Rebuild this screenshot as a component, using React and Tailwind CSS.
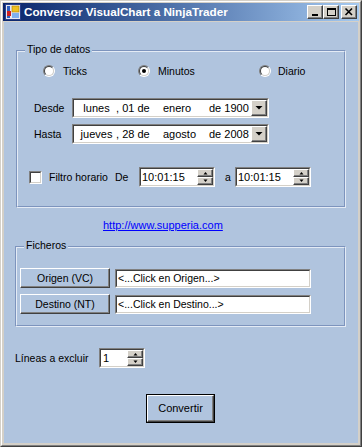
import React from "react";

function Sunken({ className = "", innerClass = "", children }) {
  return (
    <div className={`border border-t-[#808080] border-l-[#808080] border-b-white border-r-white ${className}`}>
      <div className={`h-full border border-t-[#404040] border-l-[#404040] border-b-[#d4d0c8] border-r-[#d4d0c8] bg-white ${innerClass}`}>
        {children}
      </div>
    </div>
  );
}

function Raised({ className = "", children }) {
  return (
    <div className={`border border-t-white border-l-white border-b-[#404040] border-r-[#404040] shadow-[inset_-1px_-1px_#808080] ${className}`}>
      {children}
    </div>
  );
}

function DropBtn() {
  return (
    <Raised className="w-[16px] h-full bg-[#d4d0c8] flex items-center justify-center">
      <svg width="14" height="14" viewBox="0 0 14 14">
        <polygon points="3.5,5 10.5,5 7,8.5" fill="#000" />
      </svg>
    </Raised>
  );
}

function SpinHalf({ up }) {
  return (
    <Raised className="w-full h-[8px] bg-[#d4d0c8] flex items-center justify-center">
      <svg width="7" height="4" viewBox="0 0 7 4">
        {up ? (
          <polygon points="1.5,3.5 5.5,3.5 3.5,1" fill="#000" />
        ) : (
          <polygon points="1.5,0.5 5.5,0.5 3.5,3" fill="#000" />
        )}
      </svg>
    </Raised>
  );
}

function Spin() {
  return (
    <div className="w-[16px] h-[16px] flex flex-col">
      <SpinHalf up />
      <SpinHalf />
    </div>
  );
}

function TimePicker({ value }) {
  return (
    <Sunken className="w-[76px] h-[20px]" innerClass="flex items-center justify-between">
      <span className="pl-px text-[11px] leading-[13px]">{value}</span>
      <Spin />
    </Sunken>
  );
}

function DateCombo({ day, mid, month, year }) {
  return (
    <Sunken className="w-[197px] h-[20px]" innerClass="flex items-center">
      <div className="flex-1 flex items-center text-[11px] leading-[13px] whitespace-pre">
        <span className="w-[6px] shrink-0" />
        <span className="w-[33px] shrink-0 text-center">{day}</span>
        <span className="w-[50px] shrink-0">{mid}</span>
        <span className="w-[46px] shrink-0">{month}</span>
        <span>{year}</span>
      </div>
      <DropBtn />
    </Sunken>
  );
}

function Radio({ checked }) {
  return (
    <div className="w-[12px] h-[12px] rounded-full border border-t-[#808080] border-l-[#808080] border-b-white border-r-white">
      <div className="w-full h-full rounded-full border border-t-[#404040] border-l-[#404040] border-b-[#d4d0c8] border-r-[#d4d0c8] bg-white flex items-center justify-center">
        {checked && <div className="w-[4px] h-[4px] rounded-full bg-black" />}
      </div>
    </div>
  );
}

function Group({ label, className = "", labelClass = "", children }) {
  return (
    <div className={`relative border border-t-[#7d94bd] border-l-[#7d94bd] border-b-[#e4ebf5] border-r-[#e4ebf5] ${className}`}>
      <div className="border border-t-[#e4ebf5] border-l-[#e4ebf5] border-b-[#7d94bd] border-r-[#7d94bd]">
        {children}
      </div>
      <span className={`absolute top-[-8px] px-[2px] bg-[#b0c4de] text-[10.5px] leading-[13px] ${labelClass}`}>
        {label}
      </span>
    </div>
  );
}

function WinButton({ className = "", children }) {
  return (
    <Raised className={`w-[16px] h-[14px] bg-[#d4d0c8] flex items-center justify-center ${className}`}>
      {children}
    </Raised>
  );
}

export default function App() {
  return (
    <div className="w-[362px] h-[447px] border border-t-[#d4d0c8] border-l-[#d4d0c8] border-b-[#404040] border-r-[#404040] font-['Liberation_Sans',Arial,sans-serif] text-black">
      <div className="h-full border border-t-white border-l-white border-b-[#808080] border-r-[#808080] bg-[#d4d0c8] p-px flex flex-col">
        {/* Title bar */}
        <div className="h-[18px] flex items-center bg-gradient-to-r from-[#0a246a] to-[#a6caf0] pl-[2px] pr-[2px]">
          <svg width="16" height="16" viewBox="0 0 16 16" className="shrink-0">
            <rect x="0.5" y="0.5" width="15" height="15" fill="#e8e8f0" stroke="#2a3f8a" />
            <rect x="2" y="2" width="3" height="12" fill="#3060c0" />
            <rect x="2" y="7" width="4" height="5" fill="#d02020" />
            <rect x="7" y="2" width="7" height="6" fill="#f0c020" stroke="#b08000" strokeWidth="0.6" />
            <rect x="7" y="9" width="7" height="5" fill="#80b0f0" />
          </svg>
          <span className="ml-[3px] text-white font-bold text-[11.7px] leading-[14px] whitespace-nowrap">
            Conversor VisualChart a NinjaTrader
          </span>
          <div className="flex-1" />
          <WinButton>
            <svg width="10" height="10" viewBox="0 0 10 10">
              <rect x="2" y="7" width="6" height="2" fill="#000" />
            </svg>
          </WinButton>
          <WinButton>
            <svg width="10" height="10" viewBox="0 0 10 10">
              <rect x="1.5" y="1.5" width="8" height="7" fill="none" stroke="#000" />
              <rect x="1" y="1" width="9" height="2" fill="#000" />
            </svg>
          </WinButton>
          <WinButton className="ml-[2px]">
            <svg width="10" height="10" viewBox="0 0 10 10">
              <path d="M1.5 1.5 L8 8 M8 1.5 L1.5 8" stroke="#000" strokeWidth="1.6" />
            </svg>
          </WinButton>
        </div>

        {/* Client */}
        <div className="mt-px mx-px h-[421px] bg-[#b0c4de] flex flex-col items-start text-[11px] leading-[13px]">
          <Group label="Tipo de datos" className="ml-[12px] mt-[28px] w-[330px]" labelClass="left-[8px]">
            <div className="flex items-center h-[14px] mt-[12px] pl-[25px]">
              <div className="w-[95px] flex items-center">
                <Radio />
                <span className="ml-[8px] text-[10.5px]">Ticks</span>
              </div>
              <div className="w-[121px] flex items-center">
                <Radio checked />
                <span className="ml-[8px] text-[10.5px]">Minutos</span>
              </div>
              <div className="flex items-center">
                <Radio />
                <span className="ml-[7px] text-[10.5px]">Diario</span>
              </div>
            </div>
            <div className="flex items-center h-[20px] mt-[20px] pl-[16px]">
              <span className="w-[38px] text-[10.5px]">Desde</span>
              <DateCombo day="lunes" mid=" , 01 de" month="enero" year="de 1900" />
            </div>
            <div className="flex items-center h-[20px] mt-[6px] pl-[16px]">
              <span className="w-[38px] text-[10.5px]">Hasta</span>
              <DateCombo day="jueves" mid=" , 28 de" month="agosto" year="de 2008" />
            </div>
            <div className="flex items-center h-[20px] mt-[23px] mb-[19px] pl-[11px]">
              <Sunken className="w-[13px] h-[13px]" />
              <span className="ml-[7px] w-[66px] text-[10.5px] whitespace-nowrap">Filtro horario</span>
              <span className="w-[24px] text-[10.5px]">De</span>
              <TimePicker value="10:01:15" />
              <span className="w-[20px] pl-[10px] text-[10.5px]">a</span>
              <TimePicker value="10:01:15" />
            </div>
          </Group>

          <a className="mt-[11px] ml-[99px] text-[11px] leading-[13px] text-[#0000ff] underline">
            http://www.supperia.com
          </a>

          <Group label="Ficheros" className="ml-[11px] mt-[14px] w-[331px]" labelClass="left-[8px]">
            <div className="flex items-start mt-[20px] pl-[3px]">
              <Raised className="w-[90px] h-[20px] flex items-center justify-center text-[10.5px]">
                Origen (VC)
              </Raised>
              <Sunken className="ml-[5px] mt-px w-[196px] h-[19px]" innerClass="flex items-center">
                <span className="pl-px text-[10.5px]">&lt;...Click en Origen...&gt;</span>
              </Sunken>
            </div>
            <div className="flex items-start mt-[6px] mb-[11px] pl-[3px]">
              <Raised className="w-[90px] h-[20px] flex items-center justify-center text-[10.5px]">
                Destino (NT)
              </Raised>
              <Sunken className="ml-[5px] mt-px w-[196px] h-[19px]" innerClass="flex items-center">
                <span className="pl-px text-[10.5px]">&lt;...Click en Destino...&gt;</span>
              </Sunken>
            </div>
          </Group>

          <div className="flex items-center h-[20px] mt-[21px] pl-[11px]">
            <span className="w-[84px] text-[10.5px] whitespace-nowrap">Líneas a excluir</span>
            <Sunken className="w-[46px] h-[20px]" innerClass="flex items-center justify-between">
              <span className="pl-[2px] text-[11px]">1</span>
              <Spin />
            </Sunken>
          </div>

          <div className="mt-[26px] ml-[142px] w-[69px] h-[29px] border border-black">
            <Raised className="w-full h-full flex items-center justify-center text-[11px]">
              Convertir
            </Raised>
          </div>
        </div>
      </div>
    </div>
  );
}
